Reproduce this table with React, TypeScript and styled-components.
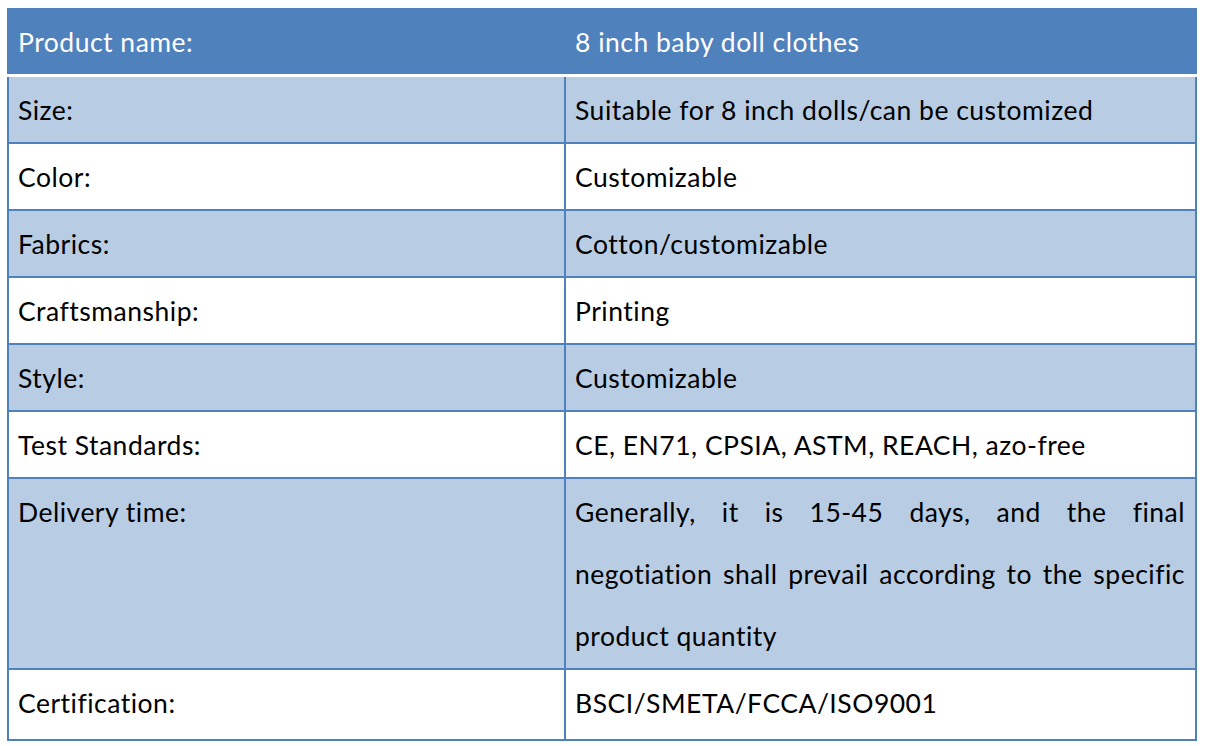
import React from "react";
import styled, { createGlobalStyle } from "styled-components";

const Global = createGlobalStyle`
  html, body { margin: 0; padding: 0; background: #ffffff; }
  body { font-family: Lato, "Open Sans", sans-serif; }
`;

const Page = styled.div`
  padding: 8px 9px 0 7px;
`;

const Table = styled.table`
  width: 1190px;
  border-collapse: collapse;
  table-layout: fixed;
  font-family: Lato, "Open Sans", sans-serif;
  font-size: 26.5px;
  letter-spacing: 0.5px;
  color: #000;
`;

const HeadCell = styled.th`
  background: #4f81bd;
  color: #ffffff;
  font-weight: 400;
  text-align: left;
  height: 64px;
  padding: 0 9px;
  border-top: 2px solid #4f81bd;
  border-left: 2px solid #4f81bd;
  border-right: 2px solid #4f81bd;
  border-bottom: 3px solid #ffffff;
  vertical-align: middle;
`;

const Row = styled.tr<{ $shaded: boolean }>`
  background: ${(p) => (p.$shaded ? "#b8cce4" : "#ffffff")};
  &:last-child td {
    padding-bottom: 5px;
  }
`;

const Cell = styled.td`
  border: 2px solid #4f81bd;
  padding: 2px 9px 1px;
  line-height: 62px;
  vertical-align: top;
`;

const ValueCell = styled(Cell)`
  text-align: justify;
  padding-right: 10px;
`;

const rows: [string, string][] = [
  ["Size:", "Suitable for 8 inch dolls/can be customized"],
  ["Color:", "Customizable"],
  ["Fabrics:", "Cotton/customizable"],
  ["Craftsmanship:", "Printing"],
  ["Style:", "Customizable"],
  ["Test Standards:", "CE, EN71, CPSIA, ASTM, REACH, azo-free"],
  [
    "Delivery time:",
    "Generally, it is 15-45 days, and the final negotiation shall prevail according to the specific product quantity",
  ],
  ["Certification:", "BSCI/SMETA/FCCA/ISO9001"],
];

export default function App() {
  return (
    <Page>
      <Global />
      <Table>
        <colgroup>
          <col style={{ width: "557px" }} />
          <col />
        </colgroup>
        <thead>
          <tr>
            <HeadCell>Product name:</HeadCell>
            <HeadCell>8 inch baby doll clothes</HeadCell>
          </tr>
        </thead>
        <tbody>
          {rows.map(([k, v], i) => (
            <Row key={k} $shaded={i % 2 === 0}>
              <Cell>{k}</Cell>
              <ValueCell>{v}</ValueCell>
            </Row>
          ))}
        </tbody>
      </Table>
    </Page>
  );
}
